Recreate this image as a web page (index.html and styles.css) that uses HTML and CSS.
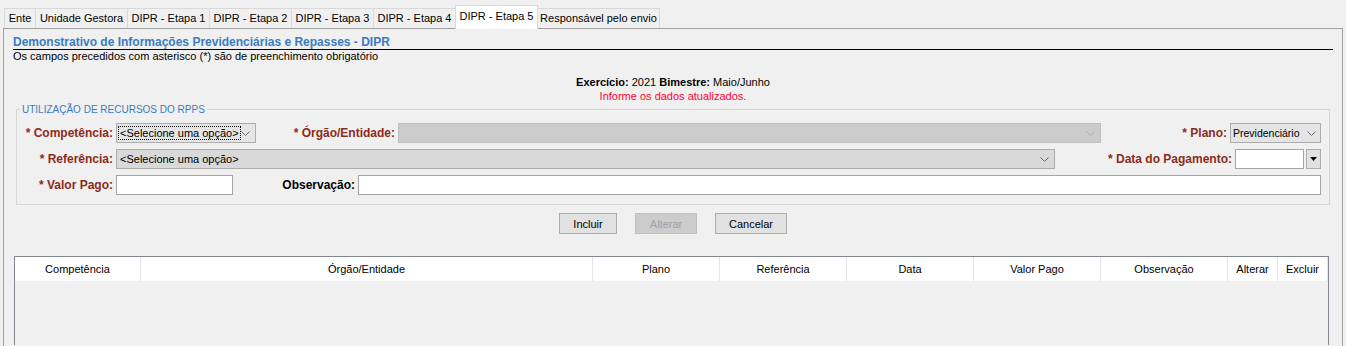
FILE: index.html
```html
<!DOCTYPE html>
<html lang="pt-BR">
<head>
    <meta charset="UTF-8">
    <title>DIPR - Etapa 5</title>
    <link rel="stylesheet" href="styles.css">
</head>
<body>
    <div class="tabs">
        <div class="tab w-32">Ente</div>
        <div class="tab w-93">Unidade Gestora</div>
        <div class="tab w-83">DIPR - Etapa 1</div>
        <div class="tab w-83">DIPR - Etapa 2</div>
        <div class="tab w-83">DIPR - Etapa 3</div>
        <div class="tab w-83">DIPR - Etapa 4</div>
        <div class="tab active w-83">DIPR - Etapa 5</div>
        <div class="tab w-123">Responsável pelo envio</div>
    </div>

    <div class="panel">
        <h2 class="title">Demonstrativo de Informações Previdenciárias e Repasses - DIPR</h2>
        <div class="subtitle">Os campos precedidos com asterisco (*) são de preenchimento obrigatório</div>

        <div class="info">
            <div><b>Exercício:</b> 2021 <b>Bimestre:</b> Maio/Junho</div>
            <div class="alert">Informe os dados atualizados.</div>
        </div>

        <fieldset class="group">
            <legend>UTILIZAÇÃO DE RECURSOS DO RPPS</legend>

            <div class="row">
                <label class="req w-99">* Competência:</label>
                <div class="select w-140"><span class="focus">&lt;Selecione uma opção&gt;</span><svg class="chev" viewBox="0 0 9 5"><path d="M0.5 0.5 L4.5 4.5 L8.5 0.5" /></svg></div>
                <label class="req w-142">* Órgão/Entidade:</label>
                <div class="select disabled w-703"><span></span><svg class="chev" viewBox="0 0 9 5"><path d="M0.5 0.5 L4.5 4.5 L8.5 0.5" /></svg></div>
                <label class="req w-129">* Plano:</label>
                <div class="select tight w-91"><span>Previdenciário</span><svg class="chev" viewBox="0 0 9 5"><path d="M0.5 0.5 L4.5 4.5 L8.5 0.5" /></svg></div>
            </div>

            <div class="row">
                <label class="req w-99">* Referência:</label>
                <div class="select gray w-939"><span>&lt;Selecione uma opção&gt;</span><svg class="chev" viewBox="0 0 9 5"><path d="M0.5 0.5 L4.5 4.5 L8.5 0.5" /></svg></div>
                <label class="req w-180">* Data do Pagamento:</label>
                <div class="input w-69"></div>
                <div class="date-btn"><svg viewBox="0 0 7 4"><path d="M0 0 H7 L3.5 4 Z" /></svg></div>
            </div>

            <div class="row">
                <label class="req w-99">* Valor Pago:</label>
                <div class="input w-117"></div>
                <label class="w-125">Observação:</label>
                <div class="input w-963"></div>
            </div>
        </fieldset>

        <div class="actions">
            <button class="btn w-58">Incluir</button>
            <button class="btn w-62" disabled>Alterar</button>
            <button class="btn w-72">Cancelar</button>
        </div>

        <div class="grid">
            <div class="grid-head">
                <div class="col w-126">Competência</div>
                <div class="col w-452">Órgão/Entidade</div>
                <div class="col w-127">Plano</div>
                <div class="col w-127">Referência</div>
                <div class="col w-127">Data</div>
                <div class="col w-127">Valor Pago</div>
                <div class="col w-127">Observação</div>
                <div class="col w-50">Alterar</div>
                <div class="col w-50">Excluir</div>
            </div>
        </div>
    </div>
</body>
</html>
```

FILE: styles.css
```css
body {
    margin: 0;
    background-color: #f0f0f0;
    font-family: "Liberation Sans", Arial, sans-serif;
    font-size: 11px;
    color: #000;
    height: 346px;
    overflow: hidden;
}

/* abas */
.tabs {
    display: flex;
    align-items: flex-end;
    height: 28px;
    padding-left: 4px;
}

.tab {
    flex: none;
    box-sizing: border-box;
    height: 20px;
    line-height: 18px;
    text-align: center;
    border: 1px solid #d9d9d9;
    border-bottom: none;
    margin-right: -1px;
    background-color: #f0f0f0;
    white-space: nowrap;
}

.tab.active {
    height: 24px;
    line-height: 20px;
    margin-bottom: -1px;
    background-color: #fff;
    position: relative;
    z-index: 1;
}

/* painel */
.panel {
    box-sizing: border-box;
    height: 318px;
    margin: 0 3px;
    padding: 0 9px;
    border: 1px solid #a0a0a0;
    border-bottom: none;
}

.title {
    margin: 0;
    padding-top: 6px;
    font-size: 12px;
    line-height: 14px;
    color: #3a7cbf;
    border-bottom: 1px solid #000;
}

.subtitle {
    line-height: 13px;
}

.info {
    margin-top: 12px;
    text-align: center;
    line-height: 14px;
}

.alert {
    color: #ff0033;
}

/* grupo */
.group {
    margin: 0 3px;
    padding: 7px 8px 9px 0;
    border: 1px solid #d5d5d5;
}

.group legend {
    margin-left: 3px;
    padding: 0 2px;
    font-size: 10px;
    line-height: 13px;
    color: #3a7cbf;
}

.row {
    display: flex;
    align-items: center;
    height: 20px;
    margin-bottom: 6px;
}

.row:last-child {
    margin-bottom: 0;
}

.row label {
    flex: none;
    box-sizing: border-box;
    padding-right: 3px;
    text-align: right;
    font-size: 12px;
    font-weight: bold;
    white-space: nowrap;
}

.row label.req {
    color: #8b2c1a;
}

.select,
.input,
.date-btn {
    flex: none;
    box-sizing: border-box;
    height: 20px;
}

.row .input + .date-btn {
    margin-left: 2px;
}

.select {
    display: flex;
    align-items: center;
    justify-content: space-between;
    padding: 0 5px 0 3px;
    border: 1px solid #acacac;
    background-color: #e5e5e5;
    white-space: nowrap;
    overflow: hidden;
}

.select.tight {
    padding: 0 4px 0 2px;
    font-size: 10.5px;
}

.select.gray {
    background-color: #d9d9d9;
}

.select.disabled {
    background-color: #cccccc;
    border-color: #bfbfbf;
}

.select .focus {
    margin-left: -1px;
    padding: 0 1px;
    outline: 1px dotted #000;
}

.chev {
    flex: none;
    width: 9px;
    height: 5px;
    fill: none;
    stroke: #6a6a6a;
    stroke-width: 1;
}

.disabled .chev {
    stroke: #adadad;
}

.input {
    background-color: #fff;
    border: 1px solid #a5a5a5;
}

.date-btn {
    width: 15px;
    display: flex;
    align-items: center;
    justify-content: center;
    border: 1px solid #adadad;
    background-color: #e1e1e1;
}

.date-btn svg {
    width: 7px;
    height: 4px;
    fill: #000;
}

/* botoes */
.actions {
    display: flex;
    justify-content: center;
    gap: 18px;
    margin-top: 8px;
}

.btn {
    box-sizing: border-box;
    height: 21px;
    padding: 0;
    font-family: inherit;
    font-size: 11px;
    color: #000;
    background-color: #e1e1e1;
    border: 1px solid #adadad;
}

.btn:disabled {
    color: #a0a0a0;
    background-color: #cccccc;
    border-color: #bfbfbf;
}

/* tabela */
.grid {
    height: 88px;
    margin: 22px 4px 0 1px;
    border: 1px solid #828790;
    border-bottom: none;
}

.grid-head {
    display: flex;
    height: 24px;
}

.col {
    flex: none;
    box-sizing: border-box;
    line-height: 24px;
    text-align: center;
    background-color: #fff;
    border-right: 1px solid #e5e5e5;
}

.w-32 { width: 32px; }
.w-50 { width: 50px; }
.w-58 { width: 58px; }
.w-62 { width: 62px; }
.w-69 { width: 69px; }
.w-72 { width: 72px; }
.w-83 { width: 83px; }
.w-91 { width: 91px; }
.w-93 { width: 93px; }
.w-99 { width: 99px; }
.w-117 { width: 117px; }
.w-123 { width: 123px; }
.w-125 { width: 125px; }
.w-126 { width: 126px; }
.w-127 { width: 127px; }
.w-129 { width: 129px; }
.w-140 { width: 140px; }
.w-142 { width: 142px; }
.w-180 { width: 180px; }
.w-452 { width: 452px; }
.w-703 { width: 703px; }
.w-939 { width: 939px; }
.w-963 { width: 963px; }
```
